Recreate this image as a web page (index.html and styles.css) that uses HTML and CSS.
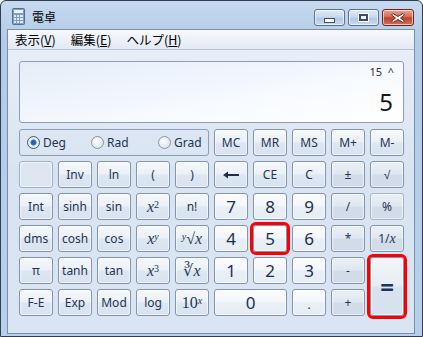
FILE: index.html
```html
<!DOCTYPE html>
<html lang="ja">
<head>
  <meta charset="UTF-8">
  <title>電卓</title>
  <link rel="stylesheet" href="styles.css">
</head>
<body>
  <div class="window">
    <div class="titlebar">
      <svg class="app-icon" width="13" height="17" viewBox="0 0 13 17">
        <rect x="0.5" y="0.5" width="12" height="16" rx="1" fill="#7f9cc4" stroke="#4f6f9c"/>
        <rect x="2" y="2" width="9" height="3" fill="#eef4fb"/>
        <g fill="#dfe9f6">
          <rect x="2" y="7" width="2" height="2"/><rect x="5" y="7" width="2" height="2"/><rect x="8" y="7" width="3" height="2"/>
          <rect x="2" y="10" width="2" height="2"/><rect x="5" y="10" width="2" height="2"/><rect x="8" y="10" width="3" height="2"/>
          <rect x="2" y="13" width="2" height="2"/><rect x="5" y="13" width="2" height="2"/><rect x="8" y="13" width="3" height="2"/>
        </g>
      </svg>
      <span class="title">電卓</span>
      <div class="caption">
        <div class="cap"><span class="min-glyph"></span></div>
        <div class="cap"><span class="max-glyph"></span></div>
        <div class="cap close">
          <svg width="16" height="12" viewBox="0 0 16 12">
            <path d="M3 1.5 L8 4.5 L13 1.5 L14.5 3 L10.5 6 L14.5 9 L13 10.5 L8 7.5 L3 10.5 L1.5 9 L5.5 6 L1.5 3 Z" fill="#fff" stroke="#6b2a22" stroke-width="1"/>
          </svg>
        </div>
      </div>
    </div>
    <div class="inner">
      <div class="menubar">
        <span class="menu">表示(<u>V</u>)</span>
        <span class="menu">編集(<u>E</u>)</span>
        <span class="menu">ヘルプ(<u>H</u>)</span>
      </div>
      <div class="client">
        <div class="display">
          <div class="memo">15&nbsp;&nbsp;^</div>
          <div class="value">5</div>
        </div>
        <div class="keys">
          <div class="angles">
            <label class="radio"><span class="dot on"></span>Deg</label>
            <label class="radio"><span class="dot"></span>Rad</label>
            <label class="radio"><span class="dot"></span>Grad</label>
          </div>
          <button class="key">MC</button>
          <button class="key">MR</button>
          <button class="key">MS</button>
          <button class="key">M+</button>
          <button class="key">M-</button>

          <button class="key blank"></button>
          <button class="key">Inv</button>
          <button class="key">ln</button>
          <button class="key">(</button>
          <button class="key">)</button>
          <button class="key">
            <svg width="18" height="8" viewBox="0 0 18 8"><path d="M1 4 L6 0.5 L6 3 L17 3 L17 5 L6 5 L6 7.5 Z" fill="#1b2f4d"/></svg>
          </button>
          <button class="key">CE</button>
          <button class="key">C</button>
          <button class="key op">±</button>
          <button class="key op">√</button>

          <button class="key">Int</button>
          <button class="key">sinh</button>
          <button class="key">sin</button>
          <button class="key math"><i>x</i><sup>2</sup></button>
          <button class="key">n!</button>
          <button class="key num">7</button>
          <button class="key num">8</button>
          <button class="key num">9</button>
          <button class="key op">/</button>
          <button class="key op dim">%</button>

          <button class="key">dms</button>
          <button class="key">cosh</button>
          <button class="key">cos</button>
          <button class="key math"><i>x</i><sup><i>y</i></sup></button>
          <button class="key math"><sup><i>y</i></sup>√<i>x</i></button>
          <button class="key num">4</button>
          <button class="key num mark">5</button>
          <button class="key num">6</button>
          <button class="key op">*</button>
          <button class="key op">1/<i class="serif">x</i></button>

          <button class="key">π</button>
          <button class="key">tanh</button>
          <button class="key">tan</button>
          <button class="key math"><i>x</i><sup>3</sup></button>
          <button class="key math">∛<i>x</i></button>
          <button class="key num">1</button>
          <button class="key num">2</button>
          <button class="key num">3</button>
          <button class="key op">-</button>
          <button class="key equals mark">=</button>

          <button class="key">F-E</button>
          <button class="key">Exp</button>
          <button class="key">Mod</button>
          <button class="key">log</button>
          <button class="key math">10<sup><i>x</i></sup></button>
          <button class="key num zero">0</button>
          <button class="key num dot-key">.</button>
          <button class="key op">+</button>
        </div>
      </div>
    </div>
  </div>
</body>
</html>
```

FILE: styles.css
```css
body {
  margin: 0;
  background: #fff;
  font-family: "Noto Sans", "Noto Sans CJK JP", sans-serif;
}
.window {
  width: 423px;
  height: 337px;
  box-sizing: border-box;
  border: 1px solid #2f3d52;
  border-radius: 6px 6px 0 0;
  padding: 0 7px 2px 6px;
  background: linear-gradient(#c6d9ef, #b3cbe7 40px, #b9d0ea);
}
.titlebar {
  height: 28px;
  display: flex;
  align-items: center;
  position: relative;
}
.app-icon {
  margin-left: 5px;
  margin-top: 3px;
}
.title {
  margin-left: 7px;
  margin-top: 3px;
  font-size: 12px;
  color: #000;
  font-family: "Noto Sans CJK JP", sans-serif;
}
.caption {
  margin-left: auto;
  margin-right: 1px;
  margin-top: 5px;
  display: flex;
  gap: 3px;
}
.cap {
  width: 29px;
  height: 15px;
  border: 1px solid #5b7193;
  border-radius: 3px;
  background: linear-gradient(#e1ebf7, #c4d6ec 50%, #b0c7e2 51%, #c8daee);
  box-shadow: inset 0 0 0 1px rgba(255,255,255,0.6);
  display: flex;
  align-items: center;
  justify-content: center;
}
.min-glyph {
  width: 9px;
  height: 3px;
  margin-top: 5px;
  background: #fff;
  border: 1px solid #3c4e6b;
}
.max-glyph {
  width: 5px;
  height: 3px;
  background: #eef3f9;
  border: 2px solid #3c4e6b;
  outline: 1px solid #fff;
}
.cap.close {
  width: 30px;
  border-color: #6b2418;
  background: linear-gradient(#e9a393, #d66b55 45%, #c0402a 52%, #d5705a);
}
.inner {
  border: 1px solid #7a8ea9;
  background: #dbe6f3;
}
.menubar {
  height: 19px;
  display: flex;
  align-items: center;
  padding-left: 7px;
  background: linear-gradient(#f7f9fc, #e2e9f4);
  border-bottom: 1px solid #b6c3d4;
  font-size: 12.5px;
  font-family: "Noto Sans CJK JP", sans-serif;
  color: #000;
}
.menu {
  margin-right: 15px;
}
.menu u {
  text-decoration-thickness: 1px;
}
.client {
  height: 283px;
  box-sizing: border-box;
  padding: 11px 10px 17px 11px;
  background: linear-gradient(#e7eef8, #d9e4f2 120px, #dae5f3);
}
.display {
  height: 62px;
  box-sizing: border-box;
  border: 1px solid #8d9db4;
  border-radius: 3px;
  background: linear-gradient(170deg, #e4edf8, #f7fafe 60%, #fff);
  margin-bottom: 6px;
  text-align: right;
  padding: 2px 9px 0 0;
  color: #1a1a1a;
}
.memo {
  font-size: 11px;
  line-height: 16px;
  color: #333;
}
.value {
  font-size: 24px;
  line-height: 30px;
  margin-top: 7px;
  padding-right: 1px;
}
.keys {
  display: grid;
  grid-template-columns: repeat(10, 34px);
  grid-template-rows: repeat(6, 27px);
  gap: 5px;
}
.angles {
  grid-column: span 5;
  border: 1px solid #8e9db3;
  border-radius: 3px;
  display: flex;
  align-items: center;
  padding-left: 7px;
  font-size: 12px;
  color: #1e3554;
  overflow: hidden;
}
.radio {
  display: flex;
  align-items: center;
  gap: 3px;
  flex-shrink: 0;
  width: 64px;
}
.radio + .radio {
  width: 67px;
}
.dot {
  width: 11px;
  height: 11px;
  border-radius: 50%;
  border: 1px solid #8b95a3;
  background: radial-gradient(circle at 40% 35%, #fff, #d4d9df);
}
.dot.on {
  border-color: #3a587f;
  background: radial-gradient(circle, #1f5aa0 0, #2c6fbf 2.5px, #e8f0f9 3.5px, #dfe7f0);
}
.key {
  border: 1px solid #8395ae;
  border-radius: 3px;
  padding: 0;
  background: linear-gradient(#f6f9fc, #eaf0f7 48%, #dde6f1 52%, #d9e3ef);
  box-shadow: inset 0 0 0 1px rgba(255,255,255,0.55);
  font-family: "Noto Sans", sans-serif;
  font-size: 12px;
  color: #1e3554;
  display: flex;
  align-items: center;
  justify-content: center;
}
.key.blank {
  border-color: #a2b2c6;
  background: #dde6f1;
}
.key.num {
  background: linear-gradient(#fbfcfe, #f3f6fa 48%, #e9eff6 52%, #e6edf5);
  font-size: 17px;
  color: #1b3050;
}
.key.dot-key {
  font-size: 12px;
  padding-top: 4px;
}
.key.op {
  background: linear-gradient(#eaf0f7, #dfe7f1 48%, #d3dde9 52%, #d2dce8);
}
.key.dim {
  border-color: #a6b4c6;
}
.key.zero {
  grid-column: span 2;
}
.key.equals {
  grid-row: span 2;
  font-size: 24px;
  font-weight: bold;
  background: linear-gradient(#f3f6fa, #e6edf5 48%, #d9e3ef 52%, #d8e2ee);
}
.key.math {
  font-family: "Liberation Serif", "DejaVu Serif", serif;
  font-size: 16px;
}
.key.math sup {
  font-size: 10px;
  position: relative;
  top: -2px;
  vertical-align: top;
}
.serif {
  font-family: "Liberation Serif", serif;
  font-size: 14px;
}
.mark {
  outline: 3px solid #f00;
  outline-offset: 0;
  border-radius: 3px;
}
```
